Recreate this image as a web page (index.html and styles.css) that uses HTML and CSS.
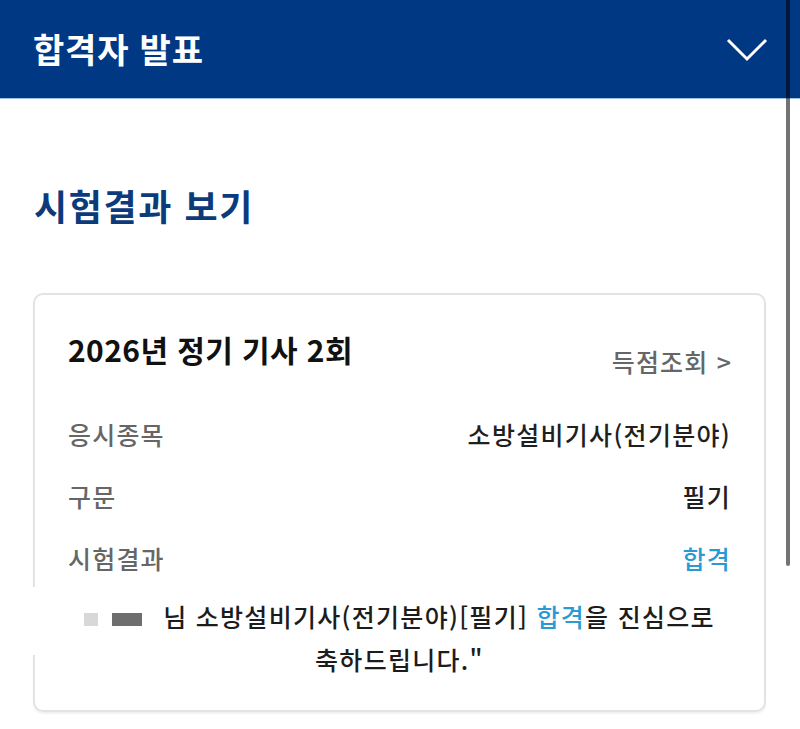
FILE: index.html
```html
<!DOCTYPE html>
<html lang="ko">
<head>
<meta charset="utf-8">
<title>합격자 발표</title>
<link rel="stylesheet" href="styles.css">
</head>
<body>
<header class="topbar">
  <h1 class="topbar-title">합격자 발표</h1>
  <svg class="chevron" width="42" height="24" viewBox="0 0 42 24" aria-hidden="true">
    <polyline points="2,2 21,21 40,2" fill="none" stroke="#ffffff" stroke-width="3" stroke-linejoin="miter"/>
  </svg>
</header>
<main class="content">
  <h2 class="section-title">시험결과 보기</h2>
  <section class="card">
    <div class="card-head">
      <h3 class="card-title">2026년 정기 기사 2회</h3>
      <a class="score-link" href="#">득점조회 <span class="arrow">&gt;</span></a>
    </div>
    <dl class="rows">
      <div class="row"><dt>응시종목</dt><dd>소방설비기사(전기분야)</dd></div>
      <div class="row"><dt>구문</dt><dd>필기</dd></div>
      <div class="row"><dt>시험결과</dt><dd class="pass">합격</dd></div>
    </dl>
    <p class="message"><span class="blur blur-light"></span><span class="blur blur-dark"></span>님 소방설비기사(전기분야)[필기] <span class="pass">합격</span>을 진심으로<br>축하드립니다."</p>
  </section>
</main>
<div class="mask"></div>
<div class="scroll-thumb"></div>
</body>
</html>
```

FILE: styles.css
```css
html, body {
  margin: 0;
  padding: 0;
  background: #ffffff;
}
body {
  font-family: "Noto Sans CJK KR", "Noto Sans", sans-serif;
  color: #1a1a1a;
  width: 800px;
  height: 729px;
  overflow: hidden;
  position: relative;
}
.topbar {
  height: 98px;
  background: #013884;
  border-bottom: 1px solid #9cc2e8;
  display: flex;
  align-items: center;
  justify-content: space-between;
  padding: 0 32px 0 33px;
}
.topbar-title {
  margin: 0;
  color: #ffffff;
  font-size: 34px;
  font-weight: 700;
  line-height: 40px;
  letter-spacing: 0.8px;
}
.chevron {
  display: block;
  margin-top: 2px;
}
.content {
  padding: 0 34px 0 33px;
}
.section-title {
  margin: 84px 0 66px 1px;
  color: #0c3b7c;
  font-size: 36px;
  font-weight: 700;
  line-height: 44px;
  letter-spacing: 1.6px;
}
.card {
  border: 2px solid #e3e3e3;
  border-radius: 10px;
  box-shadow: 0 2px 2px rgba(0, 0, 0, 0.06);
  padding: 34px 33px 29px 33px;
}
.card-head {
  display: flex;
  justify-content: space-between;
  align-items: flex-end;
}
.card-title {
  margin: 0;
  font-size: 30px;
  font-weight: 700;
  line-height: 40px;
  letter-spacing: 0.4px;
  color: #111111;
}
.score-link {
  color: #666666;
  text-decoration: none;
  font-size: 25px;
  font-weight: 500;
  line-height: 36px;
  letter-spacing: 1.2px;
  margin-bottom: -10px;
}
.arrow {
  margin-left: 0;
  letter-spacing: 0;
}
.rows {
  margin: 34px 0 0 0;
}
.row {
  display: flex;
  justify-content: space-between;
  align-items: center;
  height: 62px;
}
.row dt {
  color: #666666;
  font-size: 25px;
  font-weight: 500;
  letter-spacing: 1.2px;
}
.row dd {
  margin: 0;
  font-size: 25px;
  font-weight: 500;
  letter-spacing: 1.3px;
  color: #1f1f1f;
}
.pass {
  color: #2a9ad4;
}
.row dd.pass {
  color: #2a9ad4;
}
.message {
  margin: 6px 0 0 0;
  text-align: center;
  font-size: 25px;
  font-weight: 500;
  line-height: 43px;
  letter-spacing: 1.3px;
  color: #1c1c1c;
}
.blur {
  display: inline-block;
  height: 13px;
  vertical-align: 1px;
}
.blur-light {
  width: 14px;
  background: #d8d8d8;
  margin-right: 14px;
}
.blur-dark {
  width: 30px;
  background: #6e6e6e;
  margin-right: 21px;
}
.mask {
  position: absolute;
  left: 0;
  top: 587px;
  width: 60px;
  height: 68px;
  background: #ffffff;
}
.scroll-thumb {
  position: absolute;
  top: 0;
  left: 786px;
  width: 4px;
  height: 566px;
  border-radius: 0 0 2px 2px;
  background: rgba(0, 0, 0, 0.55);
}
```
